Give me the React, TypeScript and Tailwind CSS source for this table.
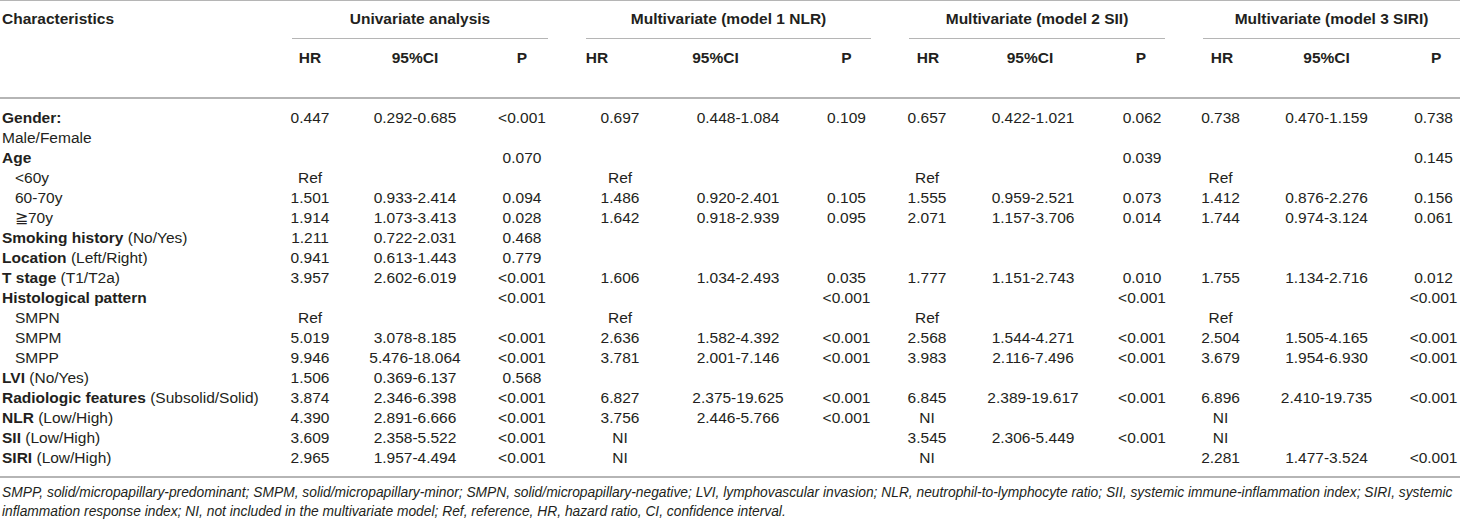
import React from 'react';

type Group = [string, string, string] | null;

type Row = {
  label: string;
  note?: string;
  indent?: boolean;
  bold?: boolean;
  cells: Group[];
  pOnly?: (string | null)[];
};

// per-column shift so the centred numbers land where they do in the print
const colPad = [
  '',
  '',
  'pl-[5px]',
  'pr-[10px]',
  'pl-[5px]',
  'pl-[14px]',
  'pr-[13px]',
  'pr-[2px]',
  'pl-[15px]',
  'pr-[13px]',
  '',
  'pl-[27px]',
];

const rows: Row[] = [
  {
    label: 'Gender:',
    bold: true,
    cells: [
      ['0.447', '0.292-0.685', '<0.001'],
      ['0.697', '0.448-1.084', '0.109'],
      ['0.657', '0.422-1.021', '0.062'],
      ['0.738', '0.470-1.159', '0.738'],
    ],
  },
  { label: 'Male/Female', cells: [null, null, null, null] },
  { label: 'Age', bold: true, cells: [null, null, null, null], pOnly: ['0.070', null, '0.039', '0.145'] },
  { label: '<60y', indent: true, cells: [['Ref', '', ''], ['Ref', '', ''], ['Ref', '', ''], ['Ref', '', '']] },
  {
    label: '60-70y',
    indent: true,
    cells: [
      ['1.501', '0.933-2.414', '0.094'],
      ['1.486', '0.920-2.401', '0.105'],
      ['1.555', '0.959-2.521', '0.073'],
      ['1.412', '0.876-2.276', '0.156'],
    ],
  },
  {
    label: '≧70y',
    indent: true,
    cells: [
      ['1.914', '1.073-3.413', '0.028'],
      ['1.642', '0.918-2.939', '0.095'],
      ['2.071', '1.157-3.706', '0.014'],
      ['1.744', '0.974-3.124', '0.061'],
    ],
  },
  { label: 'Smoking history', note: '(No/Yes)', bold: true, cells: [['1.211', '0.722-2.031', '0.468'], null, null, null] },
  { label: 'Location', note: '(Left/Right)', bold: true, cells: [['0.941', '0.613-1.443', '0.779'], null, null, null] },
  {
    label: 'T stage',
    note: '(T1/T2a)',
    bold: true,
    cells: [
      ['3.957', '2.602-6.019', '<0.001'],
      ['1.606', '1.034-2.493', '0.035'],
      ['1.777', '1.151-2.743', '0.010'],
      ['1.755', '1.134-2.716', '0.012'],
    ],
  },
  {
    label: 'Histological pattern',
    bold: true,
    cells: [null, null, null, null],
    pOnly: ['<0.001', '<0.001', '<0.001', '<0.001'],
  },
  { label: 'SMPN', indent: true, cells: [['Ref', '', ''], ['Ref', '', ''], ['Ref', '', ''], ['Ref', '', '']] },
  {
    label: 'SMPM',
    indent: true,
    cells: [
      ['5.019', '3.078-8.185', '<0.001'],
      ['2.636', '1.582-4.392', '<0.001'],
      ['2.568', '1.544-4.271', '<0.001'],
      ['2.504', '1.505-4.165', '<0.001'],
    ],
  },
  {
    label: 'SMPP',
    indent: true,
    cells: [
      ['9.946', '5.476-18.064', '<0.001'],
      ['3.781', '2.001-7.146', '<0.001'],
      ['3.983', '2.116-7.496', '<0.001'],
      ['3.679', '1.954-6.930', '<0.001'],
    ],
  },
  { label: 'LVI', note: '(No/Yes)', bold: true, cells: [['1.506', '0.369-6.137', '0.568'], null, null, null] },
  {
    label: 'Radiologic features',
    note: '(Subsolid/Solid)',
    bold: true,
    cells: [
      ['3.874', '2.346-6.398', '<0.001'],
      ['6.827', '2.375-19.625', '<0.001'],
      ['6.845', '2.389-19.617', '<0.001'],
      ['6.896', '2.410-19.735', '<0.001'],
    ],
  },
  {
    label: 'NLR',
    note: '(Low/High)',
    bold: true,
    cells: [
      ['4.390', '2.891-6.666', '<0.001'],
      ['3.756', '2.446-5.766', '<0.001'],
      ['NI', '', ''],
      ['NI', '', ''],
    ],
  },
  {
    label: 'SII',
    note: '(Low/High)',
    bold: true,
    cells: [
      ['3.609', '2.358-5.522', '<0.001'],
      ['NI', '', ''],
      ['3.545', '2.306-5.449', '<0.001'],
      ['NI', '', ''],
    ],
  },
  {
    label: 'SIRI',
    note: '(Low/High)',
    bold: true,
    cells: [
      ['2.965', '1.957-4.494', '<0.001'],
      ['NI', '', ''],
      ['NI', '', ''],
      ['2.281', '1.477-3.524', '<0.001'],
    ],
  },
];

const widths = [
  'w-[258px]',
  'w-[104px]',
  'w-[106px]',
  'w-[103px]',
  'w-[108px]',
  'w-[113px]',
  'w-[95px]',
  'w-[93px]',
  'w-[108px]',
  'w-[93px]',
  'w-[92px]',
  'w-[107px]',
  'w-[80px]',
];

const groups = [
  { title: 'Univariate analysis', line: 'ml-[34px] mr-[23px]' },
  { title: 'Multivariate (model 1 NLR)', line: 'ml-[15px] mr-[16px]' },
  { title: 'Multivariate (model 2 SII)', line: 'ml-[22px] mr-[16px]' },
  { title: 'Multivariate (model 3 SIRI)', line: 'ml-[22px] mr-0' },
];

// header labels; model 1 HR and 95%CI sit further left than their numbers
const subHeads = [
  { t: 'HR', c: '' },
  { t: '95%CI', c: '' },
  { t: 'P', c: 'pl-[5px]' },
  { t: 'HR', c: 'pr-[56px]' },
  { t: '95%CI', c: 'pr-[40px]' },
  { t: 'P', c: 'pl-[14px]' },
  { t: 'HR', c: 'pr-[11px]' },
  { t: '95%CI', c: 'pr-[8px]' },
  { t: 'P', c: 'pl-[13px]' },
  { t: 'HR', c: 'pr-[10px]' },
  { t: '95%CI', c: '' },
  { t: 'P', c: 'pl-[32px]' },
];

const App = () => {
  return (
    <div className="w-[1460px] h-[522px] bg-white text-[#231f20] font-['Liberation_Sans',Arial,sans-serif] overflow-hidden">
      <table className="table-fixed border-collapse w-[1460px] text-[15.5px] leading-[20px]">
        <colgroup>
          {widths.map((w, i) => (
            <col key={i} className={w} />
          ))}
        </colgroup>
        <thead>
          <tr className="border-t border-[#b5b5b5]">
            <th rowSpan={2} className="align-top text-left font-bold pt-[8px] pl-[2px] border-b-2 border-[#b5b5b5]">
              Characteristics
            </th>
            {groups.map((g, i) => (
              <th key={i} colSpan={3} className="align-top font-bold pt-[8px] p-0">
                <div className={`border-b border-[#b5b5b5] pb-[9px] text-center ${g.line}`}>{g.title}</div>
              </th>
            ))}
          </tr>
          <tr className="border-b-2 border-[#b5b5b5]">
            {subHeads.map((h, i) => (
              <th key={i} className={`align-top text-center font-bold pt-[9px] pb-[29px] ${h.c}`}>
                {h.t}
              </th>
            ))}
          </tr>
        </thead>
        <tbody>
          {rows.map((r, ri) => {
            const first = ri === 0;
            const last = ri === rows.length - 1;
            const vpad = first ? 'pt-[9px]' : last ? 'pb-[8px]' : '';
            const vals: string[] = [];
            r.cells.forEach((g, gi) => {
              if (g) vals.push(...g);
              else vals.push('', '', r.pOnly?.[gi] ?? '');
            });
            return (
              <tr key={ri} className={last ? 'border-b-2 border-[#b5b5b5]' : ''}>
                <td className={`text-left whitespace-nowrap ${r.indent ? 'pl-[15px]' : 'pl-[2px]'} ${vpad}`}>
                  {r.bold ? <span className="font-bold">{r.label}</span> : r.label}
                  {r.note ? <span> {r.note}</span> : null}
                </td>
                {vals.map((v, vi) => (
                  <td key={vi} className={`text-center whitespace-nowrap ${colPad[vi]} ${vpad}`}>
                    {v}
                  </td>
                ))}
              </tr>
            );
          })}
        </tbody>
      </table>
      <p className="pt-[5px] pl-[2px] text-[13.8px] leading-[19px] italic whitespace-nowrap">
        SMPP, solid/micropapillary-predominant; SMPM, solid/micropapillary-minor; SMPN, solid/micropapillary-negative; LVI,
        lymphovascular invasion; NLR, neutrophil-to-lymphocyte ratio; SII, systemic immune-inflammation index; SIRI, systemic
        <br />
        inflammation response index; NI, not included in the multivariate model; Ref, reference, HR, hazard ratio, CI,
        confidence interval.
      </p>
    </div>
  );
};

export default App;
